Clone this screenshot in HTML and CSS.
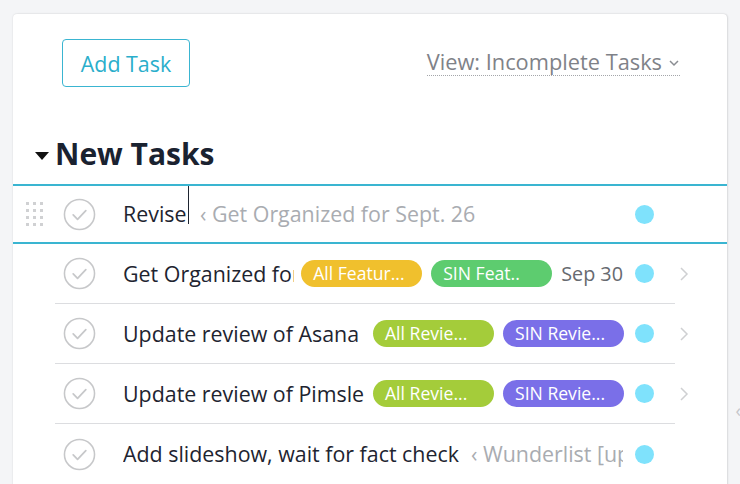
FILE: index.html
```html
<!DOCTYPE html>
<html>
<head>
<meta charset="utf-8">
<link rel="stylesheet" href="styles.css">
</head>
<body>
<div class="card">
  <div class="toolbar">
    <button class="add-btn">Add Task</button>
    <div class="view">View: Incomplete Tasks <svg class="caret" width="12" height="8" viewBox="0 0 12 8"><path d="M2 2l4 4 4-4" fill="none" stroke="#8a8d92" stroke-width="1.5"/></svg></div>
  </div>
  <h2 class="section"><span class="tri"></span>New Tasks</h2>
  <div class="list">
    <div class="row selected">
      <div class="grip"><span></span><span></span><span></span><span></span><span></span><span></span><span></span><span></span><span></span><span></span><span></span><span></span></div>
      <div class="main">
        <svg class="check" viewBox="0 0 34 34"><circle cx="17" cy="17" r="15.5" fill="none" stroke="#c7c8ca" stroke-width="1.6"/><path d="M10.5 17.5l4.5 4.5 8.5-9" fill="none" stroke="#c7c8ca" stroke-width="1.8" stroke-linecap="round" stroke-linejoin="round"/></svg>
        <div class="name"><span class="typed">Revise</span><span class="cursor"></span><span class="parent">‹ Get Organized for Sept. 26</span></div>
        <span class="dot"></span>
      </div>
      <div class="chev"></div>
    </div>
    <div class="row">
      <div class="main bordered">
        <svg class="check" viewBox="0 0 34 34"><circle cx="17" cy="17" r="15.5" fill="none" stroke="#c7c8ca" stroke-width="1.6"/><path d="M10.5 17.5l4.5 4.5 8.5-9" fill="none" stroke="#c7c8ca" stroke-width="1.8" stroke-linecap="round" stroke-linejoin="round"/></svg>
        <div class="name tight">Get Organized for Sept. 26</div>
        <span class="tag yellow">All Featur...</span>
        <span class="tag green">SIN Feat..</span>
        <span class="date">Sep 30</span>
        <span class="dot"></span>
      </div>
      <div class="chev"><svg width="10" height="16" viewBox="0 0 10 16"><path d="M2 2l6 6-6 6" fill="none" stroke="#cfd0d2" stroke-width="1.5"/></svg></div>
    </div>
    <div class="row">
      <div class="main bordered">
        <svg class="check" viewBox="0 0 34 34"><circle cx="17" cy="17" r="15.5" fill="none" stroke="#c7c8ca" stroke-width="1.6"/><path d="M10.5 17.5l4.5 4.5 8.5-9" fill="none" stroke="#c7c8ca" stroke-width="1.8" stroke-linecap="round" stroke-linejoin="round"/></svg>
        <div class="name">Update review of Asana</div>
        <span class="tag lime">All Revie...</span>
        <span class="tag purple">SIN Revie...</span>
        <span class="dot"></span>
      </div>
      <div class="chev"><svg width="10" height="16" viewBox="0 0 10 16"><path d="M2 2l6 6-6 6" fill="none" stroke="#cfd0d2" stroke-width="1.5"/></svg></div>
    </div>
    <div class="row">
      <div class="main bordered">
        <svg class="check" viewBox="0 0 34 34"><circle cx="17" cy="17" r="15.5" fill="none" stroke="#c7c8ca" stroke-width="1.6"/><path d="M10.5 17.5l4.5 4.5 8.5-9" fill="none" stroke="#c7c8ca" stroke-width="1.8" stroke-linecap="round" stroke-linejoin="round"/></svg>
        <div class="name">Update review of Pimsleur</div>
        <span class="tag lime">All Revie...</span>
        <span class="tag purple">SIN Revie...</span>
        <span class="dot"></span>
      </div>
      <div class="chev"><svg width="10" height="16" viewBox="0 0 10 16"><path d="M2 2l6 6-6 6" fill="none" stroke="#cfd0d2" stroke-width="1.5"/></svg></div>
    </div>
    <div class="row">
      <div class="main">
        <svg class="check" viewBox="0 0 34 34"><circle cx="17" cy="17" r="15.5" fill="none" stroke="#c7c8ca" stroke-width="1.6"/><path d="M10.5 17.5l4.5 4.5 8.5-9" fill="none" stroke="#c7c8ca" stroke-width="1.8" stroke-linecap="round" stroke-linejoin="round"/></svg>
        <div class="name wide"><span class="typed">Add slideshow, wait for fact check</span><span class="parent">‹ Wunderlist [update]</span></div>
        <span class="dot"></span>
      </div>
      <div class="chev"></div>
    </div>
  </div>
  <span class="edge-arrow">‹</span>
</div>
</body>
</html>
```
FILE: styles.css
```css
html, body {
  margin: 0;
  padding: 0;
  height: 100%;
  overflow: hidden;
}
body {
  background: #f4f5f7;
  font-family: "Open Sans", "Liberation Sans", sans-serif;
  color: #1e2430;
}
.card {
  position: relative;
  margin: 14px 13px 0 13px;
  width: 714px;
  height: 520px;
  background: #fff;
  border-radius: 4px;
  box-shadow: 0 0 2px rgba(0,0,0,0.12), 1px 0 2px rgba(0,0,0,0.08);
}
.toolbar {
  display: flex;
  justify-content: space-between;
  align-items: center;
  padding: 25px 47px 0 49px;
}
.add-btn {
  width: 128px;
  height: 48px;
  border: 1.5px solid #3ab5d1;
  border-radius: 4px;
  background: #fff;
  color: #2aaecb;
  font-family: inherit;
  font-size: 21.4px;
  padding: 0;
  margin: 0;
}
.view {
  color: #7f8288;
  font-size: 21.8px;
  border-bottom: 1.5px dotted #a4a6aa;
  line-height: 24px;
  padding-bottom: 1px;
  display: flex;
  align-items: center;
  gap: 6px;
  margin-top: -1px;
}
.caret { margin-top: 2px; }
.section {
  margin: 0;
  padding: 47px 0 0 22px;
  height: 50px;
  box-sizing: content-box;
  line-height: 40px;
  font-size: 30px;
  font-weight: 700;
  display: flex;
  align-items: flex-start;
  gap: 6px;
  color: #1a2230;
}
.section .tri { margin-top: 18px; }
.tri {
  width: 0;
  height: 0;
  border-left: 7.5px solid transparent;
  border-right: 7.5px solid transparent;
  border-top: 8px solid #111;
}
.row {
  display: flex;
  height: 60px;
  padding-left: 42px;
}
.row.selected {
  padding-left: 0;
  height: 56px;
  border-top: 2px solid #3ab5d1;
  border-bottom: 2px solid #3ab5d1;
}
.grip {
  width: 42px;
  display: grid;
  grid-template-columns: repeat(3, 3px);
  grid-auto-rows: 3px;
  gap: 4px 4px;
  align-content: center;
  justify-content: center;
}
.grip span { background: #d0d1d3; }
.main {
  flex: 1;
  display: flex;
  align-items: center;
  padding: 0 21px 0 8px;
  min-width: 0;
}
.main.bordered { border-bottom: 1px solid #dcdde0; }
.check {
  width: 33px;
  height: 33px;
  flex: none;
  margin-right: 27px;
}
.name {
  flex: 1;
  min-width: 0;
  white-space: nowrap;
  overflow: hidden;
  font-size: 21.4px;
  line-height: 56px;
  margin-right: 8px;
}
.name.tight { margin-right: 7px; }
.name.wide { margin-right: 12px; }
.cursor {
  display: inline-block;
  width: 1.5px;
  height: 38px;
  background: #1e2430;
  vertical-align: top;
  margin-left: 1px;
}
.parent {
  color: #a9acb1;
  margin-left: 11px;
}
.typed + .parent { margin-left: 12px; }
.tag {
  flex: none;
  width: 121px;
  box-sizing: border-box;
  height: 27px;
  line-height: 27px;
  border-radius: 14px;
  color: #fff;
  font-size: 17.6px;
  padding: 0 12px;
  white-space: nowrap;
  overflow: hidden;
  margin-right: 9px;
}
.yellow { background: #f0c02d; }
.green { background: #5dcc6f; }
.lime { background: #a4cc3a; }
.purple { background: #7a6fe8; }
.date {
  color: #676a70;
  font-size: 19.8px;
  margin-right: 12px;
  white-space: nowrap;
}
.tag + .dot { margin-left: 2px; }
.dot {
  flex: none;
  width: 19px;
  height: 19px;
  border-radius: 50%;
  background: #7fe2fc;
}
.chev {
  width: 52px;
  flex: none;
  display: flex;
  align-items: center;
  padding-left: 4px;
  box-sizing: border-box;
}
.edge-arrow {
  position: absolute;
  right: -14px;
  top: 384px;
  color: #c4c6ca;
  font-size: 18px;
}
```
